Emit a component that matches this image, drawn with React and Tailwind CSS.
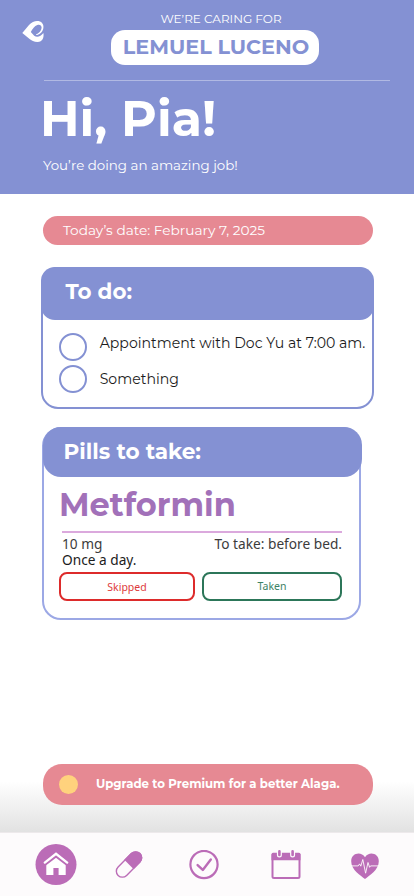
import React from "react";

function Logo() {
  return (
    <svg width="24" height="24" viewBox="0 0 24 24" fill="none">
      <path d="M1.3 13 L8 5 C11 1.6 14.5 0.6 17.6 1.1 C21.5 1.9 23.2 5.4 22.2 9 C21.1 12.6 18.3 15 15 15.1 L15 14.5 C18 13.4 20.5 10.5 20.6 7.6 C20.6 5 18.5 4.2 16.3 4.9 C13.6 5.8 11.4 9 9.8 12 L13.2 15.8 C16 18 19.8 16.6 22.4 13 C23.2 17.4 21.6 22 16.5 22 C13 22 10.5 20.5 8.3 18.7 Z" fill="#fff" />
    </svg>
  );
}

function HomeIcon() {
  return (
    <svg width="42" height="42" viewBox="0 0 42 42">
      <circle cx="21" cy="20.5" r="20.5" fill="#bb6cb7" />
      <path d="M11.3 16.8 V31 H18.4 V24 H23.6 V31 H30.7 V16.8 L21 9.5 Z" fill="#fff" />
      <path d="M9.8 19.5 L21 10.9 L32.2 19.5" fill="none" stroke="#bb6cb7" strokeWidth="4.6" />
      <path d="M9.8 18.6 L21 9.7 L32.2 18.6" fill="none" stroke="#fff" strokeWidth="2.4" strokeLinecap="round" />
    </svg>
  );
}

function PillIcon() {
  return (
    <svg width="28" height="28" viewBox="0 0 28 28">
      <g transform="rotate(-45 14 13.5)">
        <rect x="-1.4" y="7.5" width="30.8" height="12" rx="6" fill="#fdfbfc" stroke="#bb6cb7" strokeWidth="1.4" />
        <path d="M14 6.8 H23.4 A6.7 6.7 0 0 1 23.4 20.2 H14 Z" fill="#bb6cb7" />
      </g>
    </svg>
  );
}

function CheckIcon() {
  return (
    <svg width="30" height="30" viewBox="0 0 30 30" fill="none" stroke="#bb6cb7" strokeWidth="2.2" strokeLinecap="round" strokeLinejoin="round">
      <circle cx="15" cy="14.5" r="13.6" />
      <path d="M8.6 15.1 L13.8 19.9 L21.8 9.5" strokeWidth="2.4" />
    </svg>
  );
}

function CalendarIcon() {
  return (
    <svg width="30" height="30" viewBox="0 0 30 30">
      <rect x="1.5" y="4" width="27" height="24" rx="1.5" fill="none" stroke="#bb6cb7" strokeWidth="2" />
      <path d="M0.5 4.2 Q0.5 2.7 2 2.7 H28 Q29.5 2.7 29.5 4.2 V10.2 H0.5 Z" fill="#bb6cb7" />
      <path d="M8.4 1.5 V5 M21.6 1.5 V5" stroke="#fdfbfc" strokeWidth="5" strokeLinecap="round" />
      <path d="M8.4 1.4 V5 M21.6 1.4 V5" stroke="#bb6cb7" strokeWidth="2.6" strokeLinecap="round" />
    </svg>
  );
}

function HeartIcon() {
  return (
    <svg width="28" height="27" viewBox="0 0 28 27">
      <path d="M14 26 C10 22.5 0.2 17.2 0.2 8.2 C0.2 0.2 10 -2 14 4.2 C18 -2 27.8 0.2 27.8 8.2 C27.8 17.2 18 22.5 14 26 Z" fill="#bb6cb7" />
      <path d="M0.5 12.9 H7.2 L8.6 10.9 L9.8 13.2 L11.8 6.5 L14.6 20.2 L17 9.5 L18.6 14.3 L19.6 12.9 H27.5" fill="none" stroke="#fdfbfc" strokeWidth="0.9" strokeLinejoin="round" />
    </svg>
  );
}

function Todo({ label, className }) {
  return (
    <li className={`flex ${className}`}>
      <span className="size-7 shrink-0 rounded-full border-2 border-[#8491d3]" />
      <span className="ml-[12.7px] h-5 whitespace-nowrap text-[14.1px] leading-[21px]">{label}</span>
    </li>
  );
}

export default function App() {
  return (
    <div className="flex h-[896px] w-[414px] flex-col overflow-hidden bg-white font-['Montserrat','Inter',sans-serif] text-[#1c1c1c]">
      <header className="h-[194px] shrink-0 bg-[#8491d3] text-white">
        <div className="flex h-[80px]">
          <div className="w-[111px] pl-[21px] pt-5">
            <Logo />
          </div>
          <div className="flex w-52 flex-col items-center pt-[9px]">
            <p className="h-5 whitespace-nowrap pl-3 text-[12px] leading-5">WE’RE CARING FOR</p>
            <div className="mt-px flex h-[35px] w-52 items-center justify-center rounded-[14px] bg-white pb-px">
              <span className="whitespace-nowrap pl-0.5 text-[20.7px] font-bold leading-6 text-[#8491d3]">LEMUEL LUCENO</span>
            </div>
          </div>
        </div>
        <div className="ml-11 h-px w-[346px] bg-[#b1b9e3]" />
        <h1 className="ml-[40px] mt-[8px] h-[60px] whitespace-nowrap text-[49px] font-bold leading-[60px]">Hi, Pia!</h1>
        <p className="ml-[43px] mt-[6px] h-5 whitespace-nowrap text-[13.4px] leading-5">You’re doing an amazing job!</p>
      </header>

      <main className="flex grow flex-col">
        <div className="ml-[43px] mt-[22px] flex h-[29px] w-[330px] items-center rounded-[15px] bg-[#e68993] pl-5 text-white">
          <span className="-mt-px whitespace-nowrap text-[13.7px] leading-5">Today’s date: February 7, 2025</span>
        </div>

        <section className="ml-[41px] mt-[22px] h-[142px] w-[333px] rounded-[17px] border-2 border-[#8491d3]">
          <h2 className="-mx-0.5 -mt-0.5 h-[52.5px] rounded-[14px] bg-[#8491d3] pl-[24.5px] text-[21.4px] font-bold leading-[49px] text-white">To do:</h2>
          <ul className="pl-4 pt-[13.5px]">
            <Todo label="Appointment with Doc Yu at 7:00 am." className="h-8" />
            <Todo label="Something" className="h-8 [&>span:last-child]:mt-1" />
          </ul>
        </section>

        <section className="ml-[42px] mt-[18px] h-[193px] w-[320px]">
          <div className="h-full w-[319px] rounded-[19px] border-2 border-[#9ca8e5]">
            <h2 className="-ml-[1.5px] -mt-0.5 h-[50px] w-[319.5px] rounded-[18px] bg-[#8491d3] pl-[21px] text-[21.6px] font-bold leading-[49px] text-white">Pills to take:</h2>
            <div className="ml-[15px] w-[283px]">
              <h3 className="mt-2 h-10 whitespace-nowrap text-[32px] font-bold leading-10 text-[#a271b9]">Metformin</h3>
              <div className="ml-[3px] mt-[6px] h-[1.5px] w-[280px] bg-[#dba9dd]" />
              <div className="ml-[3px] mt-[3px] flex h-4 justify-between font-['Noto_Sans',sans-serif] text-[13.7px] leading-4 text-[#3c3c3c]">
                <span>10 mg</span>
                <span>To take: before bed.</span>
              </div>
              <p className="ml-[3px] h-4 font-['Noto_Sans',sans-serif] text-[13.7px] leading-4">Once a day.</p>
              <div className="mt-[4px] flex gap-[7px] font-['Noto_Sans',sans-serif] text-[10.5px]">
                <button className="h-[29px] w-[136px] rounded-[8px] border-2 border-[#dd2b2b] pt-[2px] leading-4 text-[#dd3a3a]">Skipped</button>
                <button className="h-[29px] w-[140px] rounded-[8px] border-2 border-[#2c7659] leading-4 text-[#3d8266]">Taken</button>
              </div>
            </div>
          </div>
        </section>

        <div className="mt-auto flex h-[68px] items-start bg-linear-to-b from-white from-25% to-[#e2e2e2]">
          <div className="ml-[43px] flex h-[41px] w-[330px] items-center rounded-[19px] bg-[#e68993] pl-4 text-white">
            <span className="size-[19px] shrink-0 rounded-full bg-[#ffd27d]" />
            <span className="-mt-px ml-[18px] whitespace-nowrap text-[11.75px] font-bold leading-5">Upgrade to Premium for a better Alaga.</span>
          </div>
        </div>
      </main>

      <nav className="flex h-16 shrink-0 items-center border-t border-[#ede9eb] bg-[#fdfbfc] pl-[35px]">
        <HomeIcon />
        <div className="ml-[38px]"><PillIcon /></div>
        <div className="ml-[46px]"><CheckIcon /></div>
        <div className="ml-[52px]"><CalendarIcon /></div>
        <div className="ml-[50px] pt-[3px]"><HeartIcon /></div>
      </nav>
    </div>
  );
}
